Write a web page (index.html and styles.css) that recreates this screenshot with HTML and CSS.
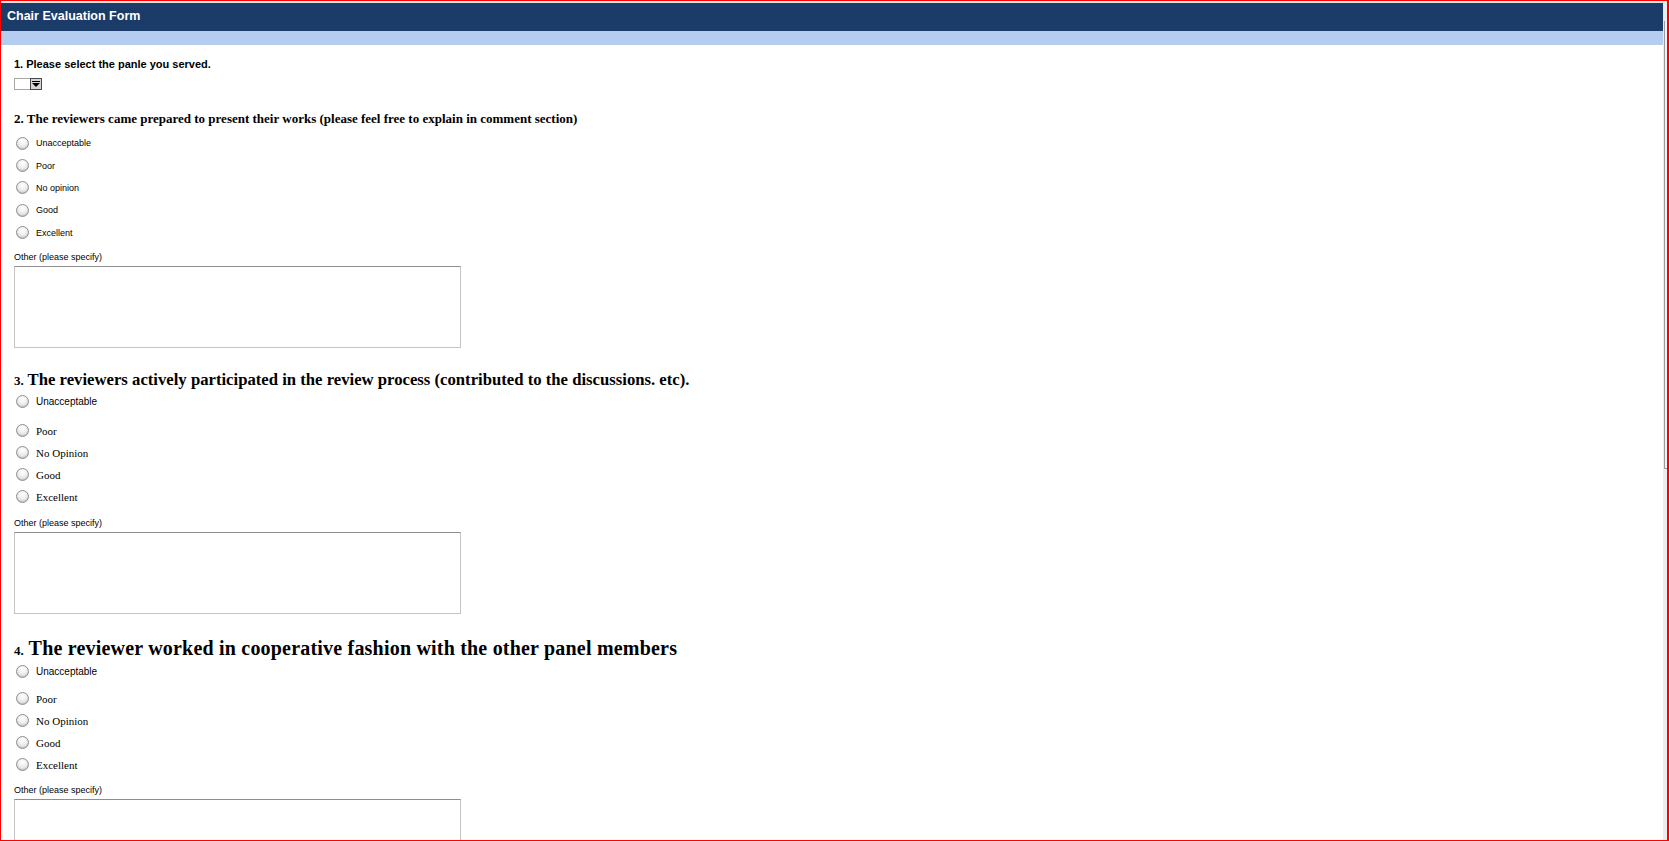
FILE: index.html
```html
<!DOCTYPE html>
<html lang="en">
<head>
  <meta charset="UTF-8">
  <meta name="viewport" content="width=device-width, initial-scale=1.0">
  <title>Chair Evaluation Form</title>
  <link rel="stylesheet" href="styles.css">
</head>
<body>

  <div class="page">
    <div class="main">
      <div class="topline"></div>
      <div class="titlebar">Chair Evaluation Form</div>
      <div class="subbar"></div>

      <form class="survey">
        <!-- 1 -->
        <div class="question q1">
          <p class="q-title">1. Please select the panle you served.</p>
          <div class="select">
            <span class="select-value"></span>
            <span class="select-arrow">
              <svg width="8" height="7" viewBox="0 0 8 7"><rect x="0" y="0" width="8" height="1" fill="#000"/><path d="M0 2h8L4 6z" fill="#000"/></svg>
            </span>
          </div>
        </div>

        <!-- 2 -->
        <div class="question q2">
          <p class="q-title serif">2. The reviewers came prepared to present their works (please feel free to explain in comment section)</p>
          <label class="option"><input type="radio" name="q2"><span>Unacceptable</span></label>
          <label class="option"><input type="radio" name="q2"><span>Poor</span></label>
          <label class="option"><input type="radio" name="q2"><span>No opinion</span></label>
          <label class="option"><input type="radio" name="q2"><span>Good</span></label>
          <label class="option"><input type="radio" name="q2"><span>Excellent</span></label>
          <p class="other-label">Other (please specify)</p>
          <textarea></textarea>
        </div>

        <!-- 3 -->
        <div class="question q3">
          <p class="q-title serif"><span class="q-num">3.</span> The reviewers actively participated in the review process (contributed to the discussions. etc).</p>
          <label class="option first"><input type="radio" name="q3"><span>Unacceptable</span></label>
          <label class="option times"><input type="radio" name="q3"><span>Poor</span></label>
          <label class="option times"><input type="radio" name="q3"><span>No Opinion</span></label>
          <label class="option times"><input type="radio" name="q3"><span>Good</span></label>
          <label class="option times"><input type="radio" name="q3"><span>Excellent</span></label>
          <p class="other-label">Other (please specify)</p>
          <textarea></textarea>
        </div>

        <!-- 4 -->
        <div class="question q4">
          <p class="q-title serif"><span class="q-num">4.</span> The reviewer worked in cooperative fashion with the other panel members</p>
          <label class="option first"><input type="radio" name="q4"><span>Unacceptable</span></label>
          <label class="option times"><input type="radio" name="q4"><span>Poor</span></label>
          <label class="option times"><input type="radio" name="q4"><span>No Opinion</span></label>
          <label class="option times"><input type="radio" name="q4"><span>Good</span></label>
          <label class="option times"><input type="radio" name="q4"><span>Excellent</span></label>
          <p class="other-label">Other (please specify)</p>
          <textarea></textarea>
        </div>
      </form>
    </div>

    <div class="scrollbar"><div class="thumb"></div></div>
  </div>

</body>
</html>
```

FILE: styles.css
```css
* {
  box-sizing: border-box;
}

html, body {
  height: 100%;
}

body {
  margin: 0;
  overflow: hidden;
  font-family: "Liberation Sans", Arial, sans-serif;
  color: #000;
  background-color: #fff;
}

.page {
  display: flex;
  height: 100vh;
  border: 1px solid #ff0000;
  border-right-width: 2px;
}

.main {
  flex: 1;
  min-width: 0;
  overflow: hidden;
}

.topline {
  height: 2px;
  background-color: #e6e6e6;
}

.titlebar {
  height: 28px;
  padding-left: 6px;
  background-color: #1b3c69;
  color: #fff;
  font-size: 12.5px;
  font-weight: bold;
  line-height: 26px;
}

.subbar {
  height: 14px;
  background-color: #b4cdf1;
}

.survey {
  padding: 0 13px;
}

.q-title {
  margin: 0;
  font-size: 11px;
  font-weight: bold;
  line-height: 14px;
}

.q1 .q-title {
  margin-top: 12px;
}

/* fake dropdown */
.select {
  display: flex;
  width: 28px;
  height: 12px;
  margin-top: 7px;
  border: 1px solid #a6a6a6;
}

.select-value {
  flex: 1;
  background-color: #fff;
}

.select-arrow {
  width: 12px;
  display: flex;
  align-items: center;
  justify-content: center;
  background-color: #d6d6d6;
  border: 1px solid #4a4a4a;
  margin: -1px -1px -1px 0;
}

.q-title.serif {
  font-family: "Liberation Serif", "Times New Roman", serif;
}

.q2 .q-title {
  margin-top: 21px;
  font-size: 13px;
  line-height: 16px;
  margin-bottom: 5px;
}

.q3 .q-title {
  margin-top: 22px;
  font-size: 16.7px;
  line-height: 20px;
}

.q4 .q-title {
  margin-top: 22px;
  font-size: 20px;
  letter-spacing: 0.2px;
  line-height: 24px;
}

.q-num {
  font-size: 13px;
  letter-spacing: 0;
  line-height: 1;
}

.option {
  display: flex;
  align-items: center;
  gap: 7px;
  height: 22px;
  padding-left: 3px;
  font-size: 9px;
}

.q2 .option {
  height: 22.4px;
}

.option input {
  appearance: none;
  -webkit-appearance: none;
  width: 13px;
  height: 13px;
  margin: 0 0 0 -1px;
  border: 1px solid #8f8f8f;
  border-radius: 50%;
  background: radial-gradient(circle at 50% 30%, #fff 0, #f1f1f1 40%, #cfcfcf 100%);
  box-shadow: inset 0 -1px 1px rgba(0, 0, 0, 0.12);
}

.option.first {
  margin-top: 1px;
  font-size: 10px;
}

.q3 .option.first {
  margin-bottom: 7px;
}

.q4 .option.first {
  margin-bottom: 5px;
}

.option.times {
  font-family: "Liberation Serif", "Times New Roman", serif;
  font-size: 11px;
}

.other-label {
  margin: 9px 0 3px;
  font-size: 9px;
  line-height: 12px;
}

.q2 .other-label {
  margin-top: 7px;
}

.q4 .other-label {
  margin-top: 8px;
}

textarea {
  display: block;
  width: 447px;
  height: 82px;
  margin: 0;
  border: 1px solid #c4c4c4;
  border-top-color: #8e8e8e;
  resize: none;
}

/* scrollbar on the right */
.scrollbar {
  width: 4px;
  background-color: #ececec;
}

.scrollbar .thumb {
  margin: 20px 0 0 1px;
  height: 448px;
  border-left: 1px solid #9c9c9c;
  border-bottom: 1px solid #9c9c9c;
  background-color: #f0f0f0;
}
```
